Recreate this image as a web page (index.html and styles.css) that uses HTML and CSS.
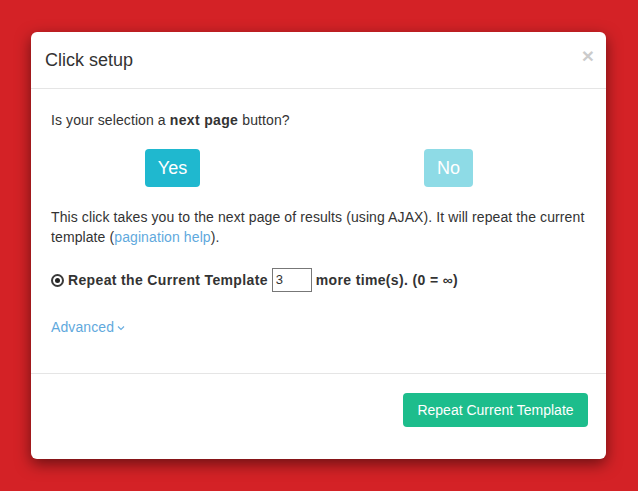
FILE: index.html
```html
<!DOCTYPE html>
<html>
<head>
<meta charset="utf-8">
<link rel="stylesheet" href="styles.css">
</head>
<body>
<div class="modal">
  <div class="modal-header">
    <h4 class="modal-title">Click setup</h4>
    <span class="close">×</span>
  </div>
  <div class="modal-body">
    <p class="question">Is your selection a <b>next page</b> button?</p>
    <div class="choices">
      <span class="btn btn-info">Yes</span>
      <span class="btn btn-info faded">No</span>
    </div>
    <p class="desc">This click takes you to the next page of results (using AJAX). It will repeat the current template (<a class="link">pagination help</a>).</p>
    <div class="repeat">
      <span class="radio"><span class="dot"></span></span>
      <b>Repeat the Current Template</b>
      <span class="num">3</span>
      <b>more time(s). (0 = ∞)</b>
    </div>
    <div class="advanced"><a class="link">Advanced</a>
      <svg class="chev" width="8" height="6" viewBox="0 0 8 6"><path d="M1 1.5 L4 4.5 L7 1.5" fill="none" stroke="#6aaee0" stroke-width="1.2"/></svg>
    </div>
  </div>
  <div class="modal-footer">
    <span class="btn btn-success">Repeat Current Template</span>
  </div>
</div>
</body>
</html>
```
FILE: styles.css
```css
html, body {
  margin: 0;
  padding: 0;
  background: #d42226;
  font-family: "Liberation Sans", Arial, sans-serif;
  font-size: 14px;
  line-height: 20px;
  color: #333;
}
body {
  padding: 32px 32px 0 31px;
  height: 491px;
  box-sizing: border-box;
}
.modal {
  width: 575px;
  background: #fff;
  border-radius: 6px;
  box-shadow: 0 5px 15px rgba(0, 0, 0, 0.5);
}
.modal-header {
  display: flex;
  justify-content: space-between;
  align-items: flex-start;
  padding: 15px 12px 15px 14px;
  border-bottom: 1px solid #e5e5e5;
}
.modal-title {
  margin: 0;
  font-size: 18px;
  line-height: 26px;
  font-weight: normal;
  color: #333;
}
.close {
  font-size: 21px;
  font-weight: bold;
  line-height: 18px;
  color: #000;
  opacity: 0.2;
  margin-top: 0;
}
.modal-body {
  padding: 21px 20px 36px 20px;
  letter-spacing: 0.1px;
}
.modal-body b {
  letter-spacing: 0.35px;
}
.modal-body p {
  margin: 0;
}
.choices {
  display: flex;
  margin: 19px 0 20px 94px;
  gap: 224px;
}
.btn {
  display: inline-block;
  border-radius: 4px;
  color: #fff;
  text-align: center;
  letter-spacing: 0;
}
.btn-info {
  background: #1fb8cf;
  font-size: 18px;
  line-height: 24px;
  padding: 7px 0;
  height: 24px;
}
.choices .btn-info { width: 55px; }
.choices .faded { width: 49px; opacity: 0.5; }
.link {
  color: #5fa9dd;
  text-decoration: none;
}
.repeat {
  display: flex;
  align-items: center;
  margin-top: 21px;
  height: 24px;
}
.radio {
  width: 9px;
  height: 9px;
  border: 2px solid #3a3a3a;
  border-radius: 50%;
  display: flex;
  align-items: center;
  justify-content: center;
  margin: 0 4px 0 0;
}
.dot {
  width: 5px;
  height: 5px;
  border-radius: 50%;
  background: #222;
}
.num {
  width: 35px;
  height: 22px;
  border: 1px solid #777;
  margin: 0 4px;
  padding-left: 3px;
  line-height: 22px;
  font-size: 13px;
  letter-spacing: 0;
}
.advanced {
  margin-top: 25px;
  display: flex;
  align-items: center;
  gap: 3px;
}
.chev { margin-top: 2px; }
.modal-footer {
  border-top: 1px solid #e5e5e5;
  padding: 19px 18px 32px;
  display: flex;
  justify-content: flex-end;
}
.btn-success {
  background: #1dbd8c;
  font-size: 14px;
  line-height: 20px;
  padding: 7px 13px;
  width: 159px;
}
```
